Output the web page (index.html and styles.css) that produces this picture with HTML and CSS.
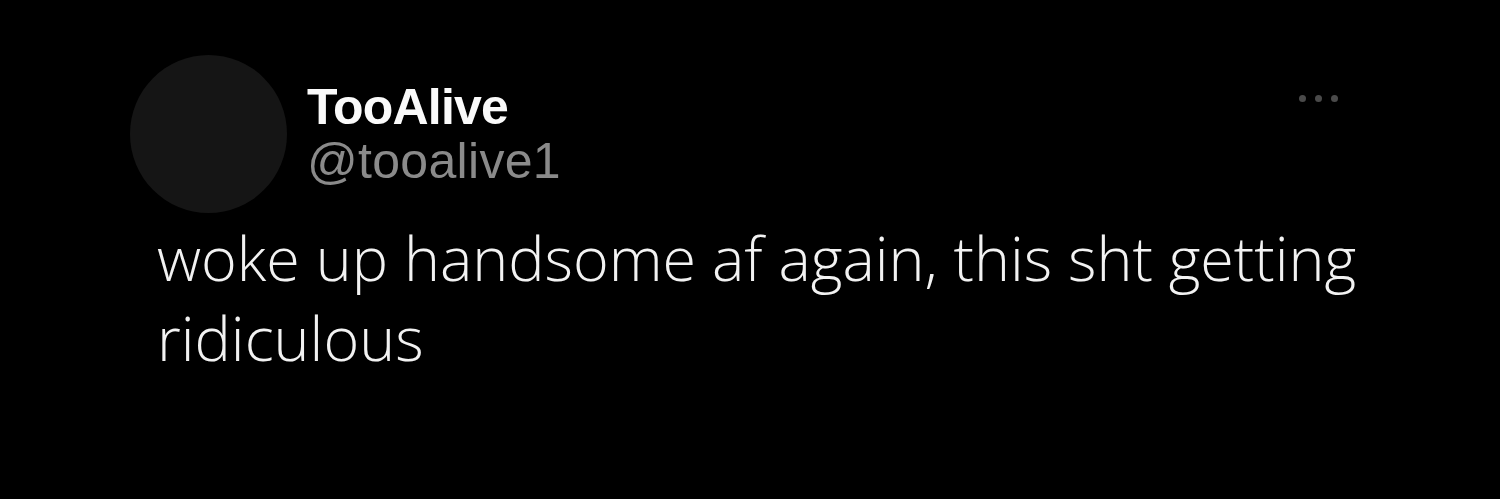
FILE: index.html
```html
<!DOCTYPE html>
<html lang="en">
<head>
<meta charset="utf-8">
<title>TooAlive tweet</title>
<link rel="stylesheet" href="styles.css">
</head>
<body>
<article class="tweet">
  <header class="tweet-head">
    <div class="avatar"></div>
    <div class="names">
      <div class="name">TooAlive</div>
      <div class="handle">@tooalive1</div>
    </div>
    <div class="more"><span></span><span></span><span></span></div>
  </header>
  <p class="tweet-text">woke up handsome af again, this sht getting ridiculous</p>
</article>
</body>
</html>
```

FILE: styles.css
```css
html, body {
  margin: 0;
  padding: 0;
  background: #000;
  width: 1500px;
  height: 499px;
  overflow: hidden;
}

.tweet {
  position: relative;
  padding: 55px 0 0 130px;
  box-sizing: border-box;
  width: 1500px;
  height: 499px;
}

.tweet-head {
  display: flex;
  align-items: center;
  gap: 20px;
}

.avatar {
  width: 157px;
  height: 158px;
  border-radius: 50%;
  background: #151515;
  flex: none;
}

.names {
  display: flex;
  flex-direction: column;
}

.name {
  font-family: "Liberation Sans", Arial, sans-serif;
  font-weight: 700;
  font-size: 50px;
  line-height: 54px;
  letter-spacing: -0.8px;
  color: #fafafa;
}

.handle {
  font-family: "Liberation Sans", Arial, sans-serif;
  font-weight: 400;
  font-size: 50px;
  line-height: 54px;
  letter-spacing: 0.3px;
  color: #8a8a8a;
}

.more {
  position: absolute;
  top: 95px;
  left: 1299px;
  display: flex;
  gap: 9px;
}

.more span {
  width: 7px;
  height: 7px;
  border-radius: 50%;
  background: #4a4a4a;
}

.tweet-text {
  margin: 5px 0 0 27px;
  width: 1300px;
  font-family: "Open Sans", "Noto Sans", sans-serif;
  font-weight: 300;
  font-size: 61px;
  line-height: 80px;
  color: #f2f2f2;
}
```
